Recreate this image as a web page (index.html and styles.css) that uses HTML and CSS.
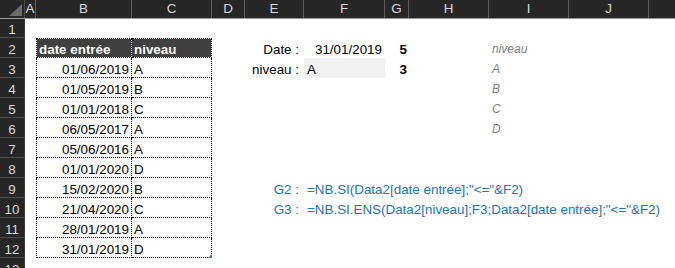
FILE: index.html
```html
<!DOCTYPE html>
<html lang="fr">
<head>
<meta charset="utf-8">
<title>Feuille</title>
<link rel="stylesheet" href="styles.css">
</head>
<body>
<div class="sheet">
  <div class="colhdr">
    <div class="cell w-rh corner"><svg width="25" height="18" viewBox="0 0 25 18"><polygon points="22,4 22,16 9,16" fill="#6b6b6b"/></svg></div>
    <div class="cell w-a">A</div>
    <div class="cell w-b">B</div>
    <div class="cell w-c">C</div>
    <div class="cell w-d">D</div>
    <div class="cell w-e">E</div>
    <div class="cell w-f">F</div>
    <div class="cell w-g">G</div>
    <div class="cell w-h">H</div>
    <div class="cell w-i">I</div>
    <div class="cell w-j">J</div>
    <div class="cell w-k"></div>
  </div>

  <div class="row first"><div class="cell w-rh rh">1</div></div>

  <div class="row">
    <div class="cell w-rh rh">2</div><div class="cell w-a"></div>
    <div class="cell w-b tb top th">date entrée</div>
    <div class="cell w-c tc top th">niveau</div>
    <div class="cell w-d"></div>
    <div class="cell w-e lbl">Date :</div>
    <div class="cell w-f num">31/01/2019</div>
    <div class="cell w-g res">5</div>
    <div class="cell w-h"></div>
    <div class="cell w-i list">niveau</div>
  </div>

  <div class="row">
    <div class="cell w-rh rh">3</div><div class="cell w-a"></div>
    <div class="cell w-b tb num">01/06/2019</div>
    <div class="cell w-c tc">A</div>
    <div class="cell w-d"></div>
    <div class="cell w-e lbl">niveau :</div>
    <div class="cell w-f input">A</div>
    <div class="cell w-g res">3</div>
    <div class="cell w-h"></div>
    <div class="cell w-i list">A</div>
  </div>

  <div class="row">
    <div class="cell w-rh rh">4</div><div class="cell w-a"></div>
    <div class="cell w-b tb num">01/05/2019</div>
    <div class="cell w-c tc">B</div>
    <div class="cell w-d"></div><div class="cell w-e"></div><div class="cell w-f"></div><div class="cell w-g"></div><div class="cell w-h"></div>
    <div class="cell w-i list">B</div>
  </div>

  <div class="row">
    <div class="cell w-rh rh">5</div><div class="cell w-a"></div>
    <div class="cell w-b tb num">01/01/2018</div>
    <div class="cell w-c tc">C</div>
    <div class="cell w-d"></div><div class="cell w-e"></div><div class="cell w-f"></div><div class="cell w-g"></div><div class="cell w-h"></div>
    <div class="cell w-i list">C</div>
  </div>

  <div class="row">
    <div class="cell w-rh rh">6</div><div class="cell w-a"></div>
    <div class="cell w-b tb num">06/05/2017</div>
    <div class="cell w-c tc">A</div>
    <div class="cell w-d"></div><div class="cell w-e"></div><div class="cell w-f"></div><div class="cell w-g"></div><div class="cell w-h"></div>
    <div class="cell w-i list">D</div>
  </div>

  <div class="row">
    <div class="cell w-rh rh">7</div><div class="cell w-a"></div>
    <div class="cell w-b tb num">05/06/2016</div>
    <div class="cell w-c tc">A</div>
  </div>

  <div class="row">
    <div class="cell w-rh rh">8</div><div class="cell w-a"></div>
    <div class="cell w-b tb num">01/01/2020</div>
    <div class="cell w-c tc">D</div>
  </div>

  <div class="row">
    <div class="cell w-rh rh">9</div><div class="cell w-a"></div>
    <div class="cell w-b tb num">15/02/2020</div>
    <div class="cell w-c tc">B</div>
    <div class="cell w-d"></div>
    <div class="cell w-e lbl formula">G2 :</div>
    <div class="cell w-f formula code">=NB.SI(Data2[date entrée];"&lt;="&amp;F2)</div>
  </div>

  <div class="row">
    <div class="cell w-rh rh">10</div><div class="cell w-a"></div>
    <div class="cell w-b tb num">21/04/2020</div>
    <div class="cell w-c tc">C</div>
    <div class="cell w-d"></div>
    <div class="cell w-e lbl formula">G3 :</div>
    <div class="cell w-f formula code">=NB.SI.ENS(Data2[niveau];F3;Data2[date entrée];"&lt;="&amp;F2)</div>
  </div>

  <div class="row">
    <div class="cell w-rh rh">11</div><div class="cell w-a"></div>
    <div class="cell w-b tb num">28/01/2019</div>
    <div class="cell w-c tc">A</div>
  </div>

  <div class="row">
    <div class="cell w-rh rh">12</div><div class="cell w-a"></div>
    <div class="cell w-b tb num">31/01/2019</div>
    <div class="cell w-c tc last">D</div>
  </div>

  <div class="row">
    <div class="cell w-rh rh">13</div>
  </div>
</div>
</body>
</html>
```
FILE: styles.css
```css
* {
  box-sizing: border-box;
  margin: 0;
  padding: 0;
}

html, body {
  background: #ffffff;
  overflow: hidden;
}

body {
  font-family: "Liberation Sans", Arial, sans-serif;
  font-size: 13.4px;
  color: #000000;
}

.sheet {
  display: flex;
  flex-direction: column;
  width: 675px;
}

.row {
  display: flex;
  height: 20px;
}

.row.first {
  height: 19px;
}

.cell {
  flex: none;
  height: 100%;
  white-space: nowrap;
  line-height: 21px;
  padding-top: 1px;
}

.row.first .cell {
  padding-top: 0;
}

/* column widths */
.w-rh { width: 25px; }
.w-a { width: 11px; }
.w-b { width: 96px; }
.w-c { width: 80px; }
.w-d { width: 33px; }
.w-e { width: 59px; }
.w-f { width: 81px; }
.w-g { width: 24px; }
.w-h { width: 80px; }
.w-i { width: 80px; }
.w-j { width: 80px; }
.w-k { flex: 1; }

/* column header bar */
.colhdr {
  display: flex;
  height: 19px;
  background: #262626;
  border-bottom: 1px solid #9b9b9b;
  color: #d9d9d9;
}

.colhdr .cell {
  padding-top: 0;
  line-height: 18px;
  text-align: center;
  border-right: 1px solid #5c5c5c;
}

.colhdr .corner {
  border-right: 1px solid #4a4a4a;
}

.colhdr .corner svg {
  display: block;
}

.colhdr .w-k {
  border-right: none;
}

/* row headers */
.rh {
  background: #262626;
  color: #d9d9d9;
  text-align: center;
  border-bottom: 1px solid #4d4d4d;
  border-right: 1px solid #3a3a3a;
}

/* data table */
.tb {
  border-left: 1px dotted #000;
  border-right: 1px dotted #000;
  border-bottom: 1px dotted #000;
  padding-left: 2px;
  padding-right: 2px;
}

.tc {
  border-right: 1px dotted #000;
  border-bottom: 1px dotted #000;
  padding-left: 2px;
  padding-right: 2px;
}

.top {
  border-top: 1px dotted #000;
  padding-top: 0;
}

.th {
  background: #404040;
  background-clip: padding-box;
  color: #ffffff;
  font-weight: bold;
}

.num {
  text-align: right;
}

.last {
  position: relative;
}

.last::after {
  content: "";
  position: absolute;
  right: -1px;
  bottom: -1px;
  width: 0;
  height: 0;
  border-left: 4px solid transparent;
  border-bottom: 4px solid #4a6fb5;
}

/* criteria block */
.lbl {
  text-align: right;
  padding-right: 5px;
}

.w-f.num {
  padding-right: 3px;
}

.input {
  background: #f2f2f2;
  padding-left: 3px;
}

.res {
  text-align: right;
  font-weight: bold;
  padding-right: 2px;
}

.list {
  font-style: italic;
  font-size: 12px;
  color: #7f7f7f;
  padding-left: 3px;
}

.formula {
  color: #2472c2;
}

.code {
  padding-left: 3px;
  overflow: visible;
}
```
